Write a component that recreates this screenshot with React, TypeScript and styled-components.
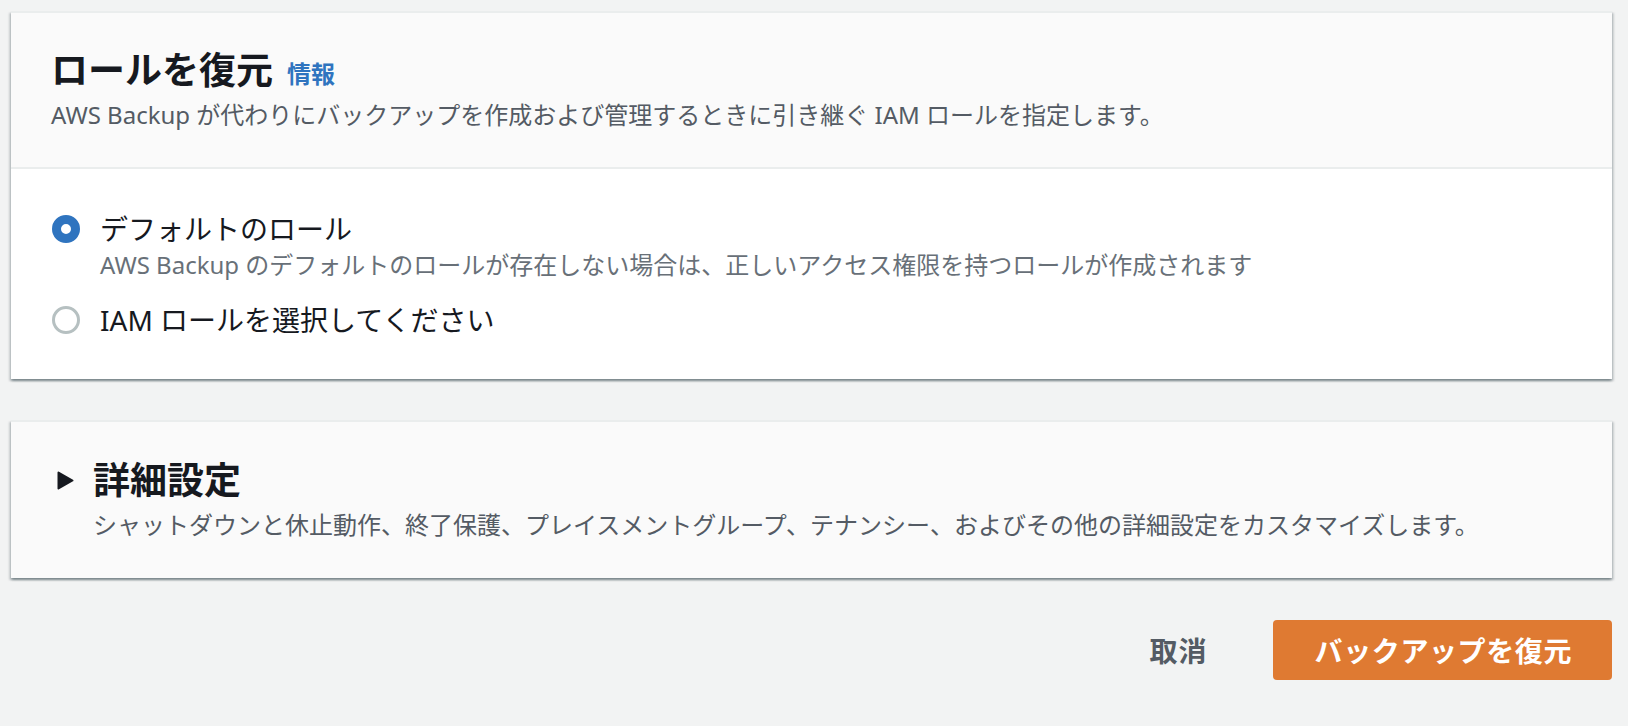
import React from "react";
import styled, { createGlobalStyle } from "styled-components";

const GlobalStyle = createGlobalStyle`
  html, body {
    margin: 0;
    padding: 0;
    background: #f2f3f3;
  }
  body {
    font-family: "Noto Sans", "Noto Sans CJK JP", sans-serif;
    -webkit-font-smoothing: antialiased;
  }
  * { box-sizing: border-box; }
`;

const Page = styled.div`
  display: flex;
  flex-direction: column;
  padding: 11px 16px 40px 11px;
`;

const Card = styled.section<{ $tinted?: boolean }>`
  background: ${(p) => (p.$tinted ? "#fafafa" : "#ffffff")};
  border-top: 2px solid #eaeded;
  box-shadow: 0 2px 2px 0 rgba(0, 28, 36, 0.3), 2px 2px 2px 0 rgba(0, 28, 36, 0.15),
    -2px 2px 2px 0 rgba(0, 28, 36, 0.15);
  margin-bottom: 41px;
`;

const CardHeader = styled.header`
  background: #fafafa;
  border-bottom: 2px solid #eaeded;
  padding: 35px 40px 36px 40px;
`;

const TitleRow = styled.div`
  display: flex;
  align-items: center;
  gap: 14px;
  height: 44px;
`;

const Title = styled.h2`
  margin: 0;
  font-size: 37px;
  line-height: 44px;
  font-weight: 700;
  color: #16191f;
`;

const InfoLink = styled.a`
  font-size: 24px;
  line-height: 32px;
  font-weight: 700;
  color: #2f74bf;
  text-decoration: none;
  margin-top: 8px;
`;

const Description = styled.p<{ $indent?: number }>`
  margin: 7px 0 0 0;
  padding-left: ${(p) => p.$indent ?? 0}px;
  font-size: 24px;
  line-height: 32px;
  color: #545b64;
`;

const CardBody = styled.div`
  padding: 40px 40px 39px 40px;
  display: flex;
  flex-direction: column;
  gap: 19px;
`;

const RadioOption = styled.label`
  display: grid;
  grid-template-columns: 28px 1fr;
  column-gap: 21px;
  align-items: center;
  cursor: pointer;
`;

const RadioCircle = styled.span<{ $checked?: boolean }>`
  width: 28px;
  height: 28px;
  border-radius: 50%;
  background: #ffffff;
  border: ${(p) => (p.$checked ? "9px solid #2f74bf" : "3px solid #b6c0c1")};
  margin-left: 1px;
`;

const RadioLabel = styled.span`
  font-size: 28px;
  line-height: 40px;
  color: #16191f;
`;

const RadioDescription = styled.span`
  grid-column: 2;
  font-size: 24px;
  line-height: 32px;
  color: #687078;
`;

const ExpandHeader = styled.div`
  padding: 36px 40px 37px 40px;
`;

const ExpandRow = styled.div`
  display: flex;
  align-items: center;
  height: 44px;
`;

const Caret = styled.svg`
  width: 17px;
  height: 19px;
  margin-left: 6px;
  margin-right: 19px;
  flex-shrink: 0;
`;

const Footer = styled.div`
  display: flex;
  justify-content: flex-end;
  align-items: center;
  gap: 35px;
  margin-top: 1px;
`;

const CancelButton = styled.button`
  background: transparent;
  border: none;
  padding: 0 30px;
  height: 60px;
  font-family: inherit;
  font-size: 28px;
  font-weight: 700;
  color: #545b64;
  letter-spacing: 1px;
  cursor: pointer;
`;

const PrimaryButton = styled.button`
  background: #df7a32;
  border: none;
  border-radius: 4px;
  height: 60px;
  padding: 0 40px 0 42px;
  font-family: inherit;
  font-size: 28px;
  font-weight: 700;
  color: #ffffff;
  letter-spacing: 0.6px;
  cursor: pointer;
`;

export default function App() {
  return (
    <>
      <GlobalStyle />
      <Page>
        <Card>
          <CardHeader>
            <TitleRow>
              <Title>ロールを復元</Title>
              <InfoLink href="#">情報</InfoLink>
            </TitleRow>
            <Description>
              AWS Backup が代わりにバックアップを作成および管理するときに引き継ぐ IAM ロールを指定します。
            </Description>
          </CardHeader>
          <CardBody>
            <RadioOption>
              <RadioCircle $checked />
              <RadioLabel>デフォルトのロール</RadioLabel>
              <RadioDescription>
                AWS Backup のデフォルトのロールが存在しない場合は、正しいアクセス権限を持つロールが作成されます
              </RadioDescription>
            </RadioOption>
            <RadioOption>
              <RadioCircle />
              <RadioLabel>IAM ロールを選択してください</RadioLabel>
            </RadioOption>
          </CardBody>
        </Card>

        <Card $tinted>
          <ExpandHeader>
            <ExpandRow>
              <Caret viewBox="0 0 17 19" aria-hidden="true">
                <path d="M1.5 1.5 L15.5 9.5 L1.5 17.5 Z" fill="#16191f" stroke="#16191f" strokeWidth="2" strokeLinejoin="round" />
              </Caret>
              <Title>詳細設定</Title>
            </ExpandRow>
            <Description $indent={42}>
              シャットダウンと休止動作、終了保護、プレイスメントグループ、テナンシー、およびその他の詳細設定をカスタマイズします。
            </Description>
          </ExpandHeader>
        </Card>

        <Footer>
          <CancelButton>取消</CancelButton>
          <PrimaryButton>バックアップを復元</PrimaryButton>
        </Footer>
      </Page>
    </>
  );
}
